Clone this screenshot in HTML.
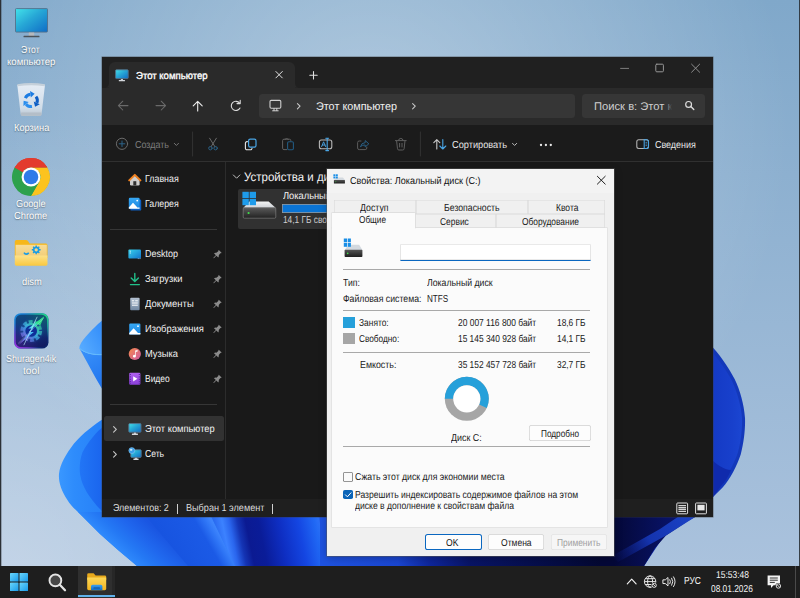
<!DOCTYPE html><html lang="ru"><head><meta charset="utf-8"><title>Desktop</title><style>

html,body{margin:0;padding:0}
body{width:800px;height:598px;overflow:hidden;position:relative;background:#a8c2da;font-family:"Liberation Sans",sans-serif}
.t{position:absolute;white-space:nowrap;line-height:1;display:block;transform-origin:0 0;text-rendering:geometricPrecision}
.a{position:absolute}
svg{position:absolute;overflow:visible}

</style></head><body>

<svg class="a" style="left:0;top:0" width="800" height="598" viewBox="0 0 800 598">
<defs>
<linearGradient id="bgv" x1="0" y1="0" x2="0" y2="566" gradientUnits="userSpaceOnUse"><stop offset="0" stop-color="#80a8ca"/><stop offset="1" stop-color="#aac2dd"/></linearGradient>
<radialGradient id="bgr" cx="370" cy="130" r="420" gradientUnits="userSpaceOnUse"><stop offset="0" stop-color="#fff" stop-opacity=".36"/><stop offset="1" stop-color="#fff" stop-opacity="0"/></radialGradient><radialGradient id="bgl" cx="0" cy="580" r="470" gradientUnits="userSpaceOnUse"><stop offset="0" stop-color="#fff" stop-opacity=".3"/><stop offset="1" stop-color="#fff" stop-opacity="0"/></radialGradient>
<linearGradient id="pl1" x1="79" y1="348" x2="104" y2="335" gradientUnits="userSpaceOnUse"><stop offset="0" stop-color="#58acff"/><stop offset="1" stop-color="#3690fb"/></linearGradient><linearGradient id="pl1b" x1="80" y1="350" x2="104" y2="385" gradientUnits="userSpaceOnUse"><stop offset="0" stop-color="#3a92fa"/><stop offset="1" stop-color="#2074ee"/></linearGradient>
<linearGradient id="pl2" x1="58" y1="0" x2="104" y2="0" gradientUnits="userSpaceOnUse"><stop offset="0" stop-color="#3a98ff"/><stop offset=".35" stop-color="#2e8cfc"/><stop offset="1" stop-color="#2680f8"/></linearGradient>
<linearGradient id="pl3" x1="79" y1="0" x2="106" y2="0" gradientUnits="userSpaceOnUse"><stop offset="0" stop-color="#2276f6"/><stop offset="1" stop-color="#1962ec"/></linearGradient>
<linearGradient id="z1" x1="100" y1="534" x2="127.9" y2="503.4" gradientUnits="userSpaceOnUse"><stop offset="0" stop-color="#2f8afc"/><stop offset=".3" stop-color="#2478f4"/><stop offset=".6" stop-color="#2068ee"/><stop offset="1" stop-color="#1a56e2"/></linearGradient>
<linearGradient id="z2" x1="165" y1="540" x2="208" y2="515" gradientUnits="userSpaceOnUse"><stop offset="0" stop-color="#1754e0"/><stop offset=".72" stop-color="#1b5ae6"/><stop offset=".9" stop-color="#2f76f6"/><stop offset="1" stop-color="#3d84fc"/></linearGradient>
<linearGradient id="z3" x1="218" y1="541" x2="330" y2="518" gradientUnits="userSpaceOnUse"><stop offset="0" stop-color="#2a6af0"/><stop offset=".07" stop-color="#3c82ff"/><stop offset=".13" stop-color="#2a66ee"/><stop offset=".2" stop-color="#1434b4"/><stop offset=".27" stop-color="#0b1a92"/><stop offset=".38" stop-color="#0a1c98"/><stop offset=".55" stop-color="#0e2ec2"/><stop offset=".72" stop-color="#1446e2"/><stop offset=".86" stop-color="#2068f4"/><stop offset=".9" stop-color="#2a70f8"/><stop offset=".92" stop-color="#1a50e0"/><stop offset="1" stop-color="#1c54e4"/></linearGradient>
<linearGradient id="pr1" x1="700" y1="0" x2="746" y2="0" gradientUnits="userSpaceOnUse"><stop offset="0" stop-color="#1236c0"/><stop offset=".7" stop-color="#1840cc"/><stop offset="1" stop-color="#1c48d4"/></linearGradient>
<linearGradient id="pr2" x1="614" y1="0" x2="720" y2="0" gradientUnits="userSpaceOnUse"><stop offset="0" stop-color="#040838"/><stop offset=".5" stop-color="#081264"/><stop offset="1" stop-color="#0c1c86"/></linearGradient>
<linearGradient id="pr3" x1="612" y1="560" x2="704" y2="508" gradientUnits="userSpaceOnUse"><stop offset="0" stop-color="#0c1e8c" stop-opacity="0"/><stop offset=".4" stop-color="#1638b8" stop-opacity=".9"/><stop offset="1" stop-color="#1c46cc"/></linearGradient>
<linearGradient id="ud" x1="326" y1="0" x2="614" y2="0" gradientUnits="userSpaceOnUse"><stop offset="0" stop-color="#1e52e0"/><stop offset=".25" stop-color="#1a46d2"/><stop offset=".36" stop-color="#0e269c"/><stop offset=".5" stop-color="#081466"/><stop offset="1" stop-color="#03072e"/></linearGradient>
</defs>
<rect width="800" height="598" fill="url(#bgv)"/>
<rect width="800" height="598" fill="url(#bgr)"/>
<rect width="800" height="598" fill="url(#bgl)"/>
<!-- upper-left petal -->
<path d="M79.4,348.4 C84,353 93,355.4 104,354.8 L104,392 C97,381 88,364 82.3,353.6 Z" fill="url(#pl1b)"/>
<path d="M104,319 C97,324.5 87,334 81,343 Q79,346.5 79.4,348.4 C84,353 93,355.4 104,354.8 Z" fill="url(#pl1)"/>
<path d="M79.6,348.2 C84,352.8 93,355.2 104,354.6" fill="none" stroke="#66beff" stroke-width=".9"/>
<!-- lower-left petal -->
<path d="M104,418.5 C96,423 82,434 74,443.5 C66,454 60,464 59,474 C58.4,482 61,490 67.4,500 C71,506 77,511 82,516 L100,534 L118,550 L137,566 L330,566 L330,500 L104,500 Z" fill="url(#pl2)"/>
<path d="M104,426 C97,431 88,442 82.6,452 C79,461 79.4,472 80.4,476 C82,486 90,500 104,513 Z" fill="url(#pl3)"/>
<!-- strip below window -->
<path d="M78,512 L146,512 L190,566 L137,566 L118,550 L100,534 Z" fill="url(#z1)"/>
<path d="M142,512 L209,512 L235,566 L188,566 Z" fill="url(#z2)"/>
<path d="M209,512 L330,512 L330,566 L235,566 Z" fill="url(#z3)"/>
<rect x="320" y="512" width="300" height="54" fill="url(#ud)"/>
<!-- right petal -->
<path d="M710,344.5 C718,352 729,368 734.6,379 C740,390 744,404 745,418 C745.4,428 744,442 740.7,454.5 C737,466 730,479 722.6,487.6 L713.5,496.6 L700,509 L688,519.4 L676,527.5 L665,534.3 L655,548 L644,566 L600,566 L600,500 L710,500 Z" fill="#1338ba"/>
<path d="M710,350 C717,357 727,371 732,381 C737,392 741,405 742,418 C742.4,428 741,441 738,452 C734.5,463 728,475 721,483 L710,494 Z" fill="url(#pr1)"/>
<path d="M710,458 C716,464 724,470 731,470 C728,477 725,482 721,486 L713.5,496.6 L700,509 L665,534.3 L644,566 L600,566 L600,510 Z" fill="#0f2aac"/>
<path d="M600,512 L704,512 L688,521 L666,535.4 L655,548 L644,566 L600,566 Z" fill="url(#pr2)"/>
<path d="M706,510 L688,521.4 L666,535.4 L618,562 L612,556 L660,529 L694,506 Z" fill="url(#pr3)"/>
<rect x="0" y="0" width="1.3" height="566" fill="#2b3036"/><rect x="799.1" y="0" width=".9" height="566" fill="#2b3036"/>
</svg>

<svg class="a" style="left:0;top:0" width="800" height="598" viewBox="0 0 800 598"><defs><linearGradient id="gm1" x1="0" y1="0" x2="1" y2="1"><stop offset="0" stop-color="#43e3ea"/><stop offset=".45" stop-color="#27a8d6"/><stop offset="1" stop-color="#0f6cc6"/></linearGradient></defs><rect x="15.50" y="8.60" width="32.00" height="23.50" rx=".8" fill="url(#gm1)" stroke="#55718a" stroke-width=".9"/><rect x="28.78" y="32.50" width="5.44" height="4.00" fill="#b4b9be"/><rect x="23.50" y="35.86" width="16.00" height="1.41" rx=".5" fill="#4b5258"/></svg>
<span class="t" style="left:21.20px;top:46.20px;font-size:10.2px;color:#fff;transform:scaleX(0.8461);text-shadow:0 .7px 1.4px rgba(0,0,0,.34),0 0 1.4px rgba(0,0,0,.2);">Этот</span>
<span class="t" style="left:6.80px;top:57.90px;font-size:10.2px;color:#fff;transform:scaleX(0.9421);text-shadow:0 .7px 1.4px rgba(0,0,0,.34),0 0 1.4px rgba(0,0,0,.2);">компьютер</span>
<svg class="a" style="left:0;top:0" width="800" height="598" viewBox="0 0 800 598">
<defs><linearGradient id="rb1" x1="0" y1="0" x2="0" y2="1"><stop offset="0" stop-color="#e9eff6" stop-opacity=".95"/><stop offset=".75" stop-color="#d6e0ea" stop-opacity=".93"/><stop offset="1" stop-color="#b7c2cd"/></linearGradient></defs>
<path d="M17.3,85 L45,85 L41.6,114 Q41.5,116 39.5,116 L22.8,116 Q20.8,116 20.6,114 Z" fill="url(#rb1)"/>
<path d="M17.3,84.2 Q31,81.6 45,84.2 L44.8,86.2 Q31,84.2 17.5,86.2Z" fill="#c5d0da"/>
<rect x="20.8" y="112.6" width="20.7" height="3.2" rx="1" fill="#b4bec8"/>
<g><path d="M25.35,98.08 A6.2,6.2 0 0 1 30.45,94.23" fill="none" stroke="#1c7ce2" stroke-width="3"/><path d="M30.11,90.95 L34.63,93.79 L30.80,97.52 Z" fill="#1c7ce2"/><path d="M35.99,96.58 A6.2,6.2 0 0 1 36.76,102.92" fill="none" stroke="#0e5ec4" stroke-width="3"/><path d="M39.78,104.26 L35.06,106.76 L33.75,101.58 Z" fill="#0e5ec4"/><path d="M31.96,106.54 A6.2,6.2 0 0 1 26.08,104.04" fill="none" stroke="#2b8eee" stroke-width="3"/><path d="M23.41,105.98 L23.62,100.65 L28.75,102.10 Z" fill="#2b8eee"/></g></svg>
<span class="t" style="left:13.50px;top:123.80px;font-size:10.2px;color:#fff;transform:scaleX(0.9095);text-shadow:0 .7px 1.4px rgba(0,0,0,.34),0 0 1.4px rgba(0,0,0,.2);">Корзина</span>
<svg class="a" style="left:0;top:0" width="800" height="598" viewBox="0 0 800 598">
<g transform="translate(31,177)">
<circle r="18.6" fill="#2da14c"/>
<path d="M-16.37,-9.45 A18.9,18.9 0 0 1 16.37,-9.45 L0,-9.45 A9.45,9.45 0 0 0 -8.18,-4.72 Z" fill="#e33b2e"/>
<path d="M16.37,-9.45 A18.9,18.9 0 0 1 0,18.9 L8.18,4.72 A9.45,9.45 0 0 0 8.18,-4.72 L0,-9.45 Z" fill="#fcc31e"/>
<path d="M0,18.9 A18.9,18.9 0 0 1 -16.37,-9.45 L-8.18,4.72 A9.45,9.45 0 0 0 8.18,4.72 Z" fill="#2da14c"/>
<path d="M-16.37,-9.45 L-8.18,-4.72 A9.45,9.45 0 0 0 -8.18,4.72 Z" fill="#2da14c"/>
<path d="M-8.18,-4.72 L-16.37,-9.45 A18.9,18.9 0 0 1 16.37,-9.45 L0,-9.45 A9.45,9.45 0 0 0 -8.18,-4.72Z" fill="#e33b2e"/>
<circle r="9.45" fill="#fff"/>
<circle r="7.3" fill="#2f7be9"/>
</g></svg>
<span class="t" style="left:15.60px;top:200.20px;font-size:10.2px;color:#fff;transform:scaleX(0.9008);text-shadow:0 .7px 1.4px rgba(0,0,0,.34),0 0 1.4px rgba(0,0,0,.2);">Google</span>
<span class="t" style="left:14.40px;top:211.80px;font-size:10.2px;color:#fff;transform:scaleX(0.9163);text-shadow:0 .7px 1.4px rgba(0,0,0,.34),0 0 1.4px rgba(0,0,0,.2);">Chrome</span>
<svg class="a" style="left:0;top:0" width="800" height="598" viewBox="0 0 800 598">
<defs><linearGradient id="fd1" x1="0" y1="0" x2="0" y2="1"><stop offset="0" stop-color="#fde28a"/><stop offset="1" stop-color="#f9c840"/></linearGradient>
<linearGradient id="fd2" x1="0" y1="0" x2="0" y2="1"><stop offset="0" stop-color="#f8dc96"/><stop offset="1" stop-color="#f2cd78"/></linearGradient></defs>
<path d="M14.8,241.6 Q14.8,240 16.4,240 L26,240 Q27,240 27.8,240.8 L29.6,243.6 L45.9,243.6 Q47.5,243.6 47.5,245.2 L47.5,258 L14.8,258Z" fill="#f6b71b"/>
<rect x="15.6" y="244.8" width="31.2" height="12" fill="url(#fd2)"/>
<path d="M14.8,255.4 L47.5,255.4 L47.5,264 Q47.5,265.7 45.9,265.7 L16.4,265.7 Q14.8,265.7 14.8,264Z" fill="url(#fd1)"/>
<g transform="translate(36.2,249.8)"><circle r="2.5" fill="none" stroke="#1a9ce4" stroke-width="1.7"/>
<g stroke="#1a9ce4" stroke-width="1.4"><path d="M0,-4.4V-2.8M0,4.4V2.8M-4.4,0H-2.8M4.4,0H2.8M-3.1,-3.1L-2,-2M3.1,3.1L2,2M-3.1,3.1L-2,2M3.1,-3.1L2,-2"/></g></g>
<path d="M24,252.6 Q25.8,255.6 28.8,252.8" fill="none" stroke="#1a9ce4" stroke-width="1.6"/>
</svg>
<span class="t" style="left:21.50px;top:277.80px;font-size:10.2px;color:#fff;transform:scaleX(0.9156);text-shadow:0 .7px 1.4px rgba(0,0,0,.34),0 0 1.4px rgba(0,0,0,.2);">dism</span>
<svg class="a" style="left:0;top:0" width="800" height="598" viewBox="0 0 800 598">
<defs><linearGradient id="sh1" x1="0" y1="0" x2="1" y2="1"><stop offset="0" stop-color="#1c8ede"/><stop offset=".5" stop-color="#1650b0"/><stop offset="1" stop-color="#0b1a5c"/></linearGradient>
<radialGradient id="sh4" cx=".92" cy=".08" r=".62"><stop offset="0" stop-color="#22dc84"/><stop offset=".5" stop-color="#1fbf96" stop-opacity=".7"/><stop offset="1" stop-color="#1fbf96" stop-opacity="0"/></radialGradient>
<radialGradient id="sh5" cx=".06" cy=".94" r=".66"><stop offset="0" stop-color="#9a34e0"/><stop offset=".5" stop-color="#8a30d0" stop-opacity=".7"/><stop offset="1" stop-color="#8a30d0" stop-opacity="0"/></radialGradient>
<linearGradient id="sh2" x1="0" y1="0" x2="0" y2="1"><stop offset="0" stop-color="#0d3a68"/><stop offset=".5" stop-color="#0f2a70"/><stop offset="1" stop-color="#14175c"/></linearGradient>
<linearGradient id="sh3" x1="1" y1="0" x2="0" y2="1"><stop offset="0" stop-color="#34ea86"/><stop offset=".45" stop-color="#4cd6f2"/><stop offset=".6" stop-color="#46a8f6"/><stop offset="1" stop-color="#a866f2"/></linearGradient>
<radialGradient id="sh7"><stop offset="0" stop-color="#2aa0e8" stop-opacity=".5"/><stop offset="1" stop-color="#2aa0e8" stop-opacity="0"/></radialGradient><linearGradient id="sh6" x1="0" y1="0" x2="1" y2="1"><stop offset="0" stop-color="#36b8f4"/><stop offset="1" stop-color="#2a5ad8"/></linearGradient></defs>
<rect x="14.2" y="313.2" width="34.3" height="35.4" rx="6.4" fill="url(#sh1)"/>
<rect x="14.2" y="313.2" width="34.3" height="35.4" rx="6.4" fill="url(#sh4)"/>
<rect x="14.2" y="313.2" width="34.3" height="35.4" rx="6.4" fill="url(#sh5)"/>
<rect x="15.7" y="314.7" width="31.3" height="32.4" rx="5.2" fill="url(#sh2)" opacity=".78"/>
<g transform="translate(31.2,331)">
<circle r="13" fill="url(#sh7)"/>
<circle r="9.2" fill="none" stroke="url(#sh3)" stroke-width="3.4" stroke-dasharray="3.9 1.9" opacity=".6"/>
<circle r="6.9" fill="none" stroke="url(#sh3)" stroke-width="2.2" opacity=".7"/>
<circle r="5.6" fill="#0f2e98"/>
<path d="M13,-14.4 L-2.4,1 L2.6,1 L-12.8,14 L2,-2.6 L-3,-2.6 Z" fill="url(#sh3)"/><path d="M13,-14.4 L4,-8 L9,-5.4Z" fill="#30e48a" opacity=".9"/>
<path d="M6,-14.2 L-7.4,14.2" stroke="#bdf0ff" stroke-width=".8" opacity=".8"/>
<path d="M12.6,-13 L-13,12.4" stroke="#d8f8ff" stroke-width=".6" opacity=".55"/></g>
</svg>
<span class="t" style="left:5.60px;top:355.20px;font-size:10.2px;color:#fff;transform:scaleX(0.8773);text-shadow:0 .7px 1.4px rgba(0,0,0,.34),0 0 1.4px rgba(0,0,0,.2);">Shuragen4ik</span>
<span class="t" style="left:22.50px;top:366.80px;font-size:10.2px;color:#fff;transform:scaleX(0.9977);text-shadow:0 .7px 1.4px rgba(0,0,0,.34),0 0 1.4px rgba(0,0,0,.2);">tool</span>
<div class="a" style="left:101.6px;top:56.6px;width:611.7px;height:460.8px;background:#191919;box-shadow:0 0 0 .5px rgba(60,60,60,.6)"></div>
<div class="a" style="left:102px;top:57px;width:611.2px;height:30.5px;background:#202020"></div>
<div class="a" style="left:102px;top:87.5px;width:611.2px;height:37.8px;background:#2a2a2a"></div>
<div class="a" style="left:102px;top:125.3px;width:611.2px;height:35.7px;background:#1b1b1b"></div>
<div class="a" style="left:102px;top:161px;width:611.2px;height:1px;background:#303030"></div>
<div class="a" style="left:109px;top:62px;width:186px;height:26px;background:#2a2a2a;border-radius:6px 6px 0 0"></div>
<svg class="a" style="left:0;top:0" width="800" height="598" viewBox="0 0 800 598"><path d="M104.5,87.6 Q109,87.6 109,83 V87.6Z M299.5,87.6 Q295,87.6 295,83 V87.6Z" fill="#2a2a2a"/></svg>
<svg class="a" style="left:0;top:0" width="800" height="598" viewBox="0 0 800 598"><defs><linearGradient id="gm2" x1="0" y1="0" x2="1" y2="1"><stop offset="0" stop-color="#43e3ea"/><stop offset=".45" stop-color="#27a8d6"/><stop offset="1" stop-color="#0f6cc6"/></linearGradient></defs><rect x="115.60" y="69.80" width="12.60" height="8.80" rx=".8" fill="url(#gm2)" stroke="#55718a" stroke-width=".9"/><rect x="120.83" y="79.00" width="2.14" height="1.50" fill="#c9ced3"/><rect x="118.75" y="80.01" width="6.30" height="1.30" rx=".5" fill="#d5d9dd"/></svg>
<span class="t" style="left:135.60px;top:71.50px;font-size:10.2px;color:#fff;transform:scaleX(0.9398);-webkit-text-stroke:.35px #fff;">Этот компьютер</span>
<svg class="a" style="left:0;top:0" width="800" height="598" viewBox="0 0 800 598"><g fill="none" stroke-linecap="round">
<path d="M275.9,71.5 l6.4,6.4 M282.3,71.5 l-6.4,6.4" stroke="#e4e4e4" stroke-width="1"/>
<path d="M309.8,75.2 h7.4 M313.5,71.5 v7.4" stroke="#e0e0e0" stroke-width="1.05"/>
<path d="M620.6,68.4 h8" stroke="#7e7e7e" stroke-width="1"/>
<rect x="655.8" y="64.2" width="7.6" height="7.6" rx="1" stroke="#979797" stroke-width="1"/>
<path d="M691.6,64.2 l8,8 M699.6,64.2 l-8,8" stroke="#8e8e8e" stroke-width="1"/>
<!-- nav arrows -->
<path d="M128,105.6 h-9.4 M122.8,101.2 l-4.4,4.4 l4.4,4.4" stroke="#6a6a6a" stroke-width="1.05" stroke-linejoin="round"/>
<path d="M156,105.6 h9.4 M161.2,101.2 l4.4,4.4 l-4.4,4.4" stroke="#6a6a6a" stroke-width="1.05" stroke-linejoin="round"/>
<path d="M197.7,111 v-9.6 M193.2,105.8 l4.5,-4.5 l4.5,4.5" stroke="#ececec" stroke-width="1.1" stroke-linejoin="round"/>
<path d="M239.6,103.2 A4.6,4.6 0 1 0 240,108" stroke="#dcdcdc" stroke-width="1.1"/>
<path d="M240.2,100.4 v3.2 h-3.2" stroke="#dcdcdc" stroke-width="1.1" stroke-linejoin="round"/>
</g></svg>
<div class="a" style="left:259px;top:94px;width:316px;height:24px;background:#363636;border-radius:3.5px"></div>
<div class="a" style="left:581.6px;top:94px;width:123px;height:24px;background:#363636;border-radius:3.5px"></div>
<svg class="a" style="left:0;top:0" width="800" height="598" viewBox="0 0 800 598"><g fill="none" stroke="#cfcfcf" stroke-linecap="round" stroke-linejoin="round">
<rect x="270" y="100.4" width="10.8" height="7.8" rx="1.2" stroke-width="1.1"/>
<path d="M272.6,110.8 h5.6 M274,108.4 v2.2 M276.8,108.4 v2.2" stroke-width="1"/>
</g><path d="M297.40,103.53 l2.67,2.67 l-2.67,2.67" fill="none" stroke="#c8c8c8" stroke-width="1.05" stroke-linecap="round" stroke-linejoin="round"/><path d="M412.60,103.53 l2.67,2.67 l-2.67,2.67" fill="none" stroke="#c8c8c8" stroke-width="1.05" stroke-linecap="round" stroke-linejoin="round"/>
<circle cx="688.6" cy="104.4" r="2.9" fill="none" stroke="#dcdcdc" stroke-width="1.2"/>
<path d="M690.8,106.6 l3,3" stroke="#dcdcdc" stroke-width="1.4" stroke-linecap="round"/>
</svg>
<span class="t" style="left:316.00px;top:101.50px;font-size:11.2px;color:#f0f0f0;transform:scaleX(0.9682);">Этот компьютер</span>
<div class="a" style="left:590px;top:96px;width:82px;height:20px;overflow:hidden"><span class="t" style="left:3.60px;top:5.50px;font-size:11.2px;color:#cfcfcf;transform:scaleX(1.0005);">Поиск в: Этот компьютер</span><div class="a" style="left:74px;top:0;width:8px;height:20px;background:linear-gradient(90deg,rgba(54,54,54,0),#363636)"></div></div>
<svg class="a" style="left:0;top:0" width="800" height="598" viewBox="0 0 800 598"><g fill="none" stroke-linecap="round" stroke-linejoin="round">
<circle cx="122" cy="143.8" r="5.6" stroke="#6a6a6a" stroke-width="1"/>
<path d="M119.2,143.8 h5.6 M122,141 v5.6" stroke="#2c6288" stroke-width="1"/>
<path d="M174.32,143.36 l2.08,2.08 l2.08,-2.08" fill="none" stroke="#777" stroke-width="1.00" stroke-linecap="round" stroke-linejoin="round"/>
<path d="M192.6,132 v24 M420.4,132 v24" stroke="#333" stroke-width="1"/>
<!-- cut -->
<path d="M209.6,138.2 l5.4,8.6 M216.4,138.2 l-5.4,8.6" stroke="#6a6a6a" stroke-width="1"/>
<circle cx="210.4" cy="148.2" r="1.7" stroke="#2a6086" stroke-width="1"/><circle cx="215.6" cy="148.2" r="1.7" stroke="#2a6086" stroke-width="1"/>
<!-- copy -->
<path d="M247.4,141.6 h-0.4 a1.6,1.6 0 0 0 -1.6,1.6 v5 a1.6,1.6 0 0 0 1.6,1.6 h3.4 a1.6,1.6 0 0 0 1.6,-1.6" stroke="#e8e8e8" stroke-width="1.1"/>
<rect x="248.6" y="139.2" width="7.4" height="8" rx="1.6" stroke="#4aa6e6" stroke-width="1.2"/>
<!-- paste -->
<path d="M286.6,149.6 h-2.6 a1.4,1.4 0 0 1 -1.4,-1.4 v-7.6 a1.4,1.4 0 0 1 1.4,-1.4 h5.4 a1.4,1.4 0 0 1 1.4,1.4 v0.6" stroke="#606060" stroke-width="1"/>
<path d="M285,139.2 q1.7,-1.4 3.4,0" stroke="#606060" stroke-width="1"/>
<rect x="287.6" y="141.8" width="5.8" height="8" rx="1.2" stroke="#225a80" stroke-width="1.1"/>
<!-- rename -->
<rect x="319.4" y="140" width="12.4" height="8.8" rx="2" stroke="#b8b8b8" stroke-width="1.1"/>
<path d="M321.6,146.6 l2,-4.8 l2,4.8 M322.4,145 h2.6" stroke="#4aa6e6" stroke-width=".9"/>
<path d="M327.2,138.4 v12 M325.8,138.2 h2.8 M325.8,150.6 h2.8" stroke="#4aa6e6" stroke-width="1.1"/>
<!-- share -->
<path d="M361,141 h-1.8 a1.6,1.6 0 0 0 -1.6,1.6 v5.4 a1.6,1.6 0 0 0 1.6,1.6 h6 a1.6,1.6 0 0 0 1.6,-1.6 v-0.8" stroke="#5c5c5c" stroke-width="1"/>
<path d="M360.6,146.4 q0.6,-3.6 4.6,-3.8 v-2 l3.6,3.2 l-3.6,3.2 v-2 q-2.8,-0.2 -4.6,1.4Z" stroke="#2a6086" stroke-width="1"/>
<!-- delete -->
<path d="M395.4,140.6 h10.8 M398.6,140.4 q0,-2 2.2,-2 q2.2,0 2.2,2 M396.6,140.8 l0.9,8 q0.1,1.2 1.4,1.2 h3.8 q1.3,0 1.4,-1.2 l0.9,-8 M399.6,143.4 v3.6 M402,143.4 v3.6" stroke="#5e5e5e" stroke-width="1"/>
<!-- sort -->
<path d="M436.8,149 v-9.4 M433.8,142.6 l3,-3 l3,3" stroke="#c8c8c8" stroke-width="1.1"/>
<path d="M442.8,139.6 v9.4 M439.8,146 l3,3 l3,-3" stroke="#4aa6e6" stroke-width="1.1"/>
<path d="M512.52,143.36 l2.08,2.08 l2.08,-2.08" fill="none" stroke="#bdbdbd" stroke-width="1.00" stroke-linecap="round" stroke-linejoin="round"/>
<!-- details -->
<rect x="636.8" y="139.7" width="11.7" height="8.7" rx="2" stroke="#b6b6b6" stroke-width="1.05"/>
<path d="M644.2,139.7 v8.7" stroke="#4aa6e6" stroke-width="1.05"/>
<path d="M644.2,139.7 h2.3 a2,2 0 0 1 2,2 v4.7 a2,2 0 0 1 -2,2 h-2.3" stroke="#4aa6e6" stroke-width="1.05"/>
<path d="M645.9,142.4 h.9 M645.9,144 h.9 M645.9,145.6 h.9" stroke="#4aa6e6" stroke-width=".7"/>
</g>
<g fill="#eaeaea"><circle cx="541" cy="145" r="1.15"/><circle cx="545.9" cy="145" r="1.15"/><circle cx="550.8" cy="145" r="1.15"/></g>
</svg>
<span class="t" style="left:135.00px;top:140.50px;font-size:10.2px;color:#7c7c7c;transform:scaleX(0.8781);">Создать</span>
<span class="t" style="left:452.00px;top:140.70px;font-size:10.2px;color:#e6e6e6;transform:scaleX(0.9035);">Сортировать</span>
<span class="t" style="left:655.20px;top:140.70px;font-size:10.2px;color:#e6e6e6;transform:scaleX(0.8765);">Сведения</span>
<div class="a" style="left:225px;top:162px;width:1px;height:337px;background:#2c2c2c"></div>
<div class="a" style="left:110px;top:229px;width:107px;height:1px;background:#363636"></div>
<div class="a" style="left:110px;top:403.6px;width:107px;height:1px;background:#363636"></div>
<div class="a" style="left:104px;top:416.4px;width:119.6px;height:24.2px;background:#323232;border-radius:2.5px"></div>
<svg class="a" style="left:0;top:0" width="800" height="598" viewBox="0 0 800 598">
<defs>
<linearGradient id="gdk" x1="0" y1="0" x2="1" y2="1"><stop offset="0" stop-color="#38d2ec"/><stop offset="1" stop-color="#1274cc"/></linearGradient>
<linearGradient id="gdoc" x1="0" y1="0" x2="0" y2="1"><stop offset="0" stop-color="#b4c2d2"/><stop offset="1" stop-color="#7288a2"/></linearGradient>
<linearGradient id="gmu" x1="0" y1="0" x2="1" y2="1"><stop offset="0" stop-color="#f58a4a"/><stop offset="1" stop-color="#cf5aa6"/></linearGradient>
<linearGradient id="gvi" x1="0" y1="0" x2="0" y2="1"><stop offset="0" stop-color="#b060f0"/><stop offset="1" stop-color="#8a3fd8"/></linearGradient>
<linearGradient id="gpi" x1="0" y1="0" x2="0" y2="1"><stop offset="0" stop-color="#36a8f4"/><stop offset="1" stop-color="#1c86e0"/></linearGradient>
</defs>
<!-- home -->
<path d="M130,180 L134.8,175.4 L139.6,180 V184.2 Q139.6,185.4 138.4,185.4 H131.2 Q130,185.4 130,184.2Z" fill="#cdcdcd"/>
<rect x="133.3" y="181.2" width="3" height="4.2" fill="#303030"/>
<path d="M129.2,180.4 L134.8,174.9 L140.4,180.4" fill="none" stroke="#f0811f" stroke-width="2" stroke-linecap="round" stroke-linejoin="round"/>
<!-- gallery -->
<rect x="130.4" y="199.6" width="10.8" height="11" rx="1.2" fill="#0f5fc0"/>
<rect x="128.8" y="197.8" width="10.8" height="11" rx="1.2" fill="url(#gpi)"/>
<path d="M128.8,207.4 L133,202.8 L137.4,207.4 L139.6,207.4 V208.8 H128.8Z" fill="#fff"/><path d="M129.6,207.8 L133,203.6 L137,207.8Z" fill="#fff"/>
<circle cx="137.2" cy="200.6" r=".9" fill="#fff"/>
<!-- desktop -->
<rect x="128.4" y="249.4" width="12.6" height="9" rx="1" fill="url(#gdk)"/>
<path d="M129.8,251.2 h1 M129.8,253 h1" stroke="#fff" stroke-width=".9"/><path d="M137.8,258.6 h.9 M139.6,258.6 h.9" stroke="#bfe4f6" stroke-width=".7"/>
<!-- downloads -->
<path d="M134.8,273.4 v8 M131.2,278 l3.6,3.6 l3.6,-3.6" fill="none" stroke="#22c08a" stroke-width="1.4" stroke-linecap="round" stroke-linejoin="round"/>
<path d="M130.4,284.6 h9" stroke="#22c08a" stroke-width="1.3" stroke-linecap="round"/>
<!-- documents -->
<rect x="130.2" y="297.8" width="9.4" height="12.4" rx="1" fill="url(#gdoc)"/>
<path d="M132,300.8 h2.2 M135.2,300.8 h2.6 M132,303 h5.8 M132,305.2 h5.8" stroke="#fff" stroke-width="1"/>
<!-- pictures -->
<rect x="129.2" y="323.6" width="11.2" height="10.8" rx="1.2" fill="url(#gpi)"/>
<path d="M129.2,333 L133.6,328.2 L138,333 H140.4 V334.4 H129.2Z" fill="#fff"/><path d="M130,333.4 L133.6,329 L137.6,333.4Z" fill="#fff"/>
<circle cx="138" cy="326.2" r=".9" fill="#fff"/>
<!-- music -->
<circle cx="134.8" cy="354" r="6.1" fill="url(#gmu)"/>
<path d="M135.2,350.6 L137.6,350 V351.6 L135.9,352 V356.2 A1.5,1.3 0 1 1 135.2,355.1Z" fill="#fff"/>
<!-- video -->
<rect x="129.2" y="372.8" width="11.2" height="12" rx="1.2" fill="url(#gvi)"/>
<path d="M130.3,374 v1 M130.3,376.4 v1 M130.3,378.8 v1 M130.3,381.2 v1 M130.3,383.4 v.6 M139.3,374 v1 M139.3,376.4 v1 M139.3,378.8 v1 M139.3,381.2 v1 M139.3,383.4 v.6" stroke="#4a1f90" stroke-width="1"/>
<path d="M133.2,376.2 L137.4,378.8 L133.2,381.4Z" fill="#fff"/>
<g transform="translate(217.2,254.40) rotate(45) scale(.84)" fill="#8c8c8c"><path d="M-2.3,-5 H2.3 V-4 H1.7 L2,-0.6 Q3.6,0.4 3.6,1.8 H0.45 V5.6 L0,6.6 L-0.45,5.6 V1.8 H-3.6 Q-3.6,0.4 -2,-0.6 L-1.7,-4 H-2.3Z"/></g><g transform="translate(217.2,279.40) rotate(45) scale(.84)" fill="#8c8c8c"><path d="M-2.3,-5 H2.3 V-4 H1.7 L2,-0.6 Q3.6,0.4 3.6,1.8 H0.45 V5.6 L0,6.6 L-0.45,5.6 V1.8 H-3.6 Q-3.6,0.4 -2,-0.6 L-1.7,-4 H-2.3Z"/></g><g transform="translate(217.2,304.20) rotate(45) scale(.84)" fill="#8c8c8c"><path d="M-2.3,-5 H2.3 V-4 H1.7 L2,-0.6 Q3.6,0.4 3.6,1.8 H0.45 V5.6 L0,6.6 L-0.45,5.6 V1.8 H-3.6 Q-3.6,0.4 -2,-0.6 L-1.7,-4 H-2.3Z"/></g><g transform="translate(217.2,329.20) rotate(45) scale(.84)" fill="#8c8c8c"><path d="M-2.3,-5 H2.3 V-4 H1.7 L2,-0.6 Q3.6,0.4 3.6,1.8 H0.45 V5.6 L0,6.6 L-0.45,5.6 V1.8 H-3.6 Q-3.6,0.4 -2,-0.6 L-1.7,-4 H-2.3Z"/></g><g transform="translate(217.2,354.20) rotate(45) scale(.84)" fill="#8c8c8c"><path d="M-2.3,-5 H2.3 V-4 H1.7 L2,-0.6 Q3.6,0.4 3.6,1.8 H0.45 V5.6 L0,6.6 L-0.45,5.6 V1.8 H-3.6 Q-3.6,0.4 -2,-0.6 L-1.7,-4 H-2.3Z"/></g><g transform="translate(217.2,379.20) rotate(45) scale(.84)" fill="#8c8c8c"><path d="M-2.3,-5 H2.3 V-4 H1.7 L2,-0.6 Q3.6,0.4 3.6,1.8 H0.45 V5.6 L0,6.6 L-0.45,5.6 V1.8 H-3.6 Q-3.6,0.4 -2,-0.6 L-1.7,-4 H-2.3Z"/></g><path d="M113.60,426.67 l2.73,2.73 l-2.73,2.73" fill="none" stroke="#c8c8c8" stroke-width="1.10" stroke-linecap="round" stroke-linejoin="round"/><path d="M113.60,451.67 l2.73,2.73 l-2.73,2.73" fill="none" stroke="#c8c8c8" stroke-width="1.10" stroke-linecap="round" stroke-linejoin="round"/></svg>
<svg class="a" style="left:0;top:0" width="800" height="598" viewBox="0 0 800 598"><defs><linearGradient id="gm3" x1="0" y1="0" x2="1" y2="1"><stop offset="0" stop-color="#43e3ea"/><stop offset=".45" stop-color="#27a8d6"/><stop offset="1" stop-color="#0f6cc6"/></linearGradient></defs><rect x="128.80" y="423.60" width="12.20" height="8.60" rx=".8" fill="url(#gm3)" stroke="#55718a" stroke-width=".9"/><rect x="133.86" y="432.60" width="2.07" height="1.46" fill="#c9ced3"/><rect x="131.85" y="433.58" width="6.10" height="1.30" rx=".5" fill="#d5d9dd"/></svg>
<svg class="a" style="left:0;top:0" width="800" height="598" viewBox="0 0 800 598"><defs><linearGradient id="gm4" x1="0" y1="0" x2="1" y2="1"><stop offset="0" stop-color="#43e3ea"/><stop offset=".45" stop-color="#27a8d6"/><stop offset="1" stop-color="#0f6cc6"/></linearGradient></defs><rect x="130.80" y="449.80" width="10.40" height="7.60" rx=".8" fill="url(#gm4)" stroke="#55718a" stroke-width=".9"/><rect x="135.12" y="457.80" width="1.77" height="1.29" fill="#c9ced3"/><rect x="133.40" y="458.62" width="5.20" height="1.30" rx=".5" fill="#d5d9dd"/></svg>
<svg class="a" style="left:0;top:0" width="800" height="598" viewBox="0 0 800 598"><circle cx="131.8" cy="450.6" r="3" fill="#3a9ee8" stroke="#8fcbf4" stroke-width=".5"/><path d="M129.8,449.6 q1.4,-1.4 2.6,-.4 q.4,1.4 -1,1.6 q-1,.8 -1.6,-1.2Z" fill="#c8e8fb"/></svg>
<span class="t" style="left:145.30px;top:174.60px;font-size:10.2px;color:#f2f2f2;transform:scaleX(0.8690);">Главная</span>
<span class="t" style="left:145.30px;top:199.80px;font-size:10.2px;color:#f2f2f2;transform:scaleX(0.8624);">Галерея</span>
<span class="t" style="left:145.30px;top:249.90px;font-size:10.2px;color:#f2f2f2;transform:scaleX(0.8829);">Desktop</span>
<span class="t" style="left:145.30px;top:275.00px;font-size:10.2px;color:#f2f2f2;transform:scaleX(0.9146);">Загрузки</span>
<span class="t" style="left:145.30px;top:299.90px;font-size:10.2px;color:#f2f2f2;transform:scaleX(0.9273);">Документы</span>
<span class="t" style="left:145.30px;top:324.70px;font-size:10.2px;color:#f2f2f2;transform:scaleX(0.9183);">Изображения</span>
<span class="t" style="left:145.30px;top:349.80px;font-size:10.2px;color:#f2f2f2;transform:scaleX(0.9155);">Музыка</span>
<span class="t" style="left:145.30px;top:374.70px;font-size:10.2px;color:#f2f2f2;transform:scaleX(0.8298);">Видео</span>
<span class="t" style="left:145.30px;top:424.50px;font-size:10.2px;color:#f2f2f2;transform:scaleX(0.9148);">Этот компьютер</span>
<span class="t" style="left:145.30px;top:449.70px;font-size:10.2px;color:#f2f2f2;transform:scaleX(0.8425);">Сеть</span>
<svg class="a" style="left:0;top:0" width="800" height="598" viewBox="0 0 800 598"><path d="M233.35,174.97 l3.25,3.25 l3.25,-3.25" fill="none" stroke="#bdbdbd" stroke-width="1.00" stroke-linecap="round" stroke-linejoin="round"/></svg>
<span class="t" style="left:243.60px;top:171.05px;font-size:12.3px;color:#f4f4f4;transform:scaleX(0.9341);">Устройства и диски</span>
<div class="a" style="left:238.2px;top:189.2px;width:190px;height:39.4px;background:#313131;border-radius:2px"></div>
<svg class="a" style="left:0;top:0" width="800" height="598" viewBox="0 0 800 598"><defs><linearGradient id="dv1" x1="0" y1="0" x2="0" y2="1"><stop offset="0" stop-color="#5a5a5a"/><stop offset="1" stop-color="#222"/></linearGradient>
<linearGradient id="dv2" x1="0" y1="0" x2="0" y2="1"><stop offset="0" stop-color="#f4f4f4"/><stop offset="1" stop-color="#cfd2d6"/></linearGradient></defs>
<path d="M249.4,201.4 H268.6 L275.6,207.8 H243.4Z" fill="url(#dv2)"/>
<rect x="243.2" y="207.6" width="32.6" height="10.6" rx="1.2" fill="url(#dv1)" stroke="#8a8a8a" stroke-width=".6"/>
<circle cx="248.6" cy="213" r="1.1" fill="#3fe04a"/>
<g fill="#1e9bea"><rect x="242.4" y="191.8" width="6.4" height="6.3"/><rect x="249.6" y="191.8" width="6.4" height="6.3"/><rect x="242.4" y="198.9" width="6.4" height="6.3"/><rect x="249.6" y="198.9" width="6.4" height="6.3"/></g>
</svg>
<span class="t" style="left:283.00px;top:192.10px;font-size:10.2px;color:#f2f2f2;transform:scaleX(0.9127);">Локальный диск (C:)</span>
<div class="a" style="left:281.6px;top:203.8px;width:140px;height:9.2px;background:#0a74d4;box-shadow:inset 0 0 0 .7px #9a9a9a"></div>
<span class="t" style="left:283.40px;top:216.10px;font-size:10.2px;color:#cfcfcf;transform:scaleX(0.8156);">14,1 ГБ свободно из 32,7 ГБ</span>
<div class="a" style="left:102px;top:498.6px;width:611.2px;height:18.6px;background:#1f1f1f"></div>
<span class="t" style="left:113.20px;top:504.00px;font-size:10.2px;color:#dcdcdc;transform:scaleX(0.8738);">Элементов: 2</span>
<span class="t" style="left:185.60px;top:504.00px;font-size:10.2px;color:#dcdcdc;transform:scaleX(0.8930);">Выбран 1 элемент</span>
<div class="a" style="left:176.8px;top:503.6px;width:1px;height:10.4px;background:#d0d0d0"></div>
<div class="a" style="left:272px;top:503.6px;width:1px;height:10.4px;background:#d0d0d0"></div>
<svg class="a" style="left:0;top:0" width="800" height="598" viewBox="0 0 800 598"><g fill="none" stroke="#e0e0e0" stroke-width="1">
<rect x="676.8" y="503" width="10.8" height="10.8" rx=".8"/>
<path d="M678.4,505.5 h7.6 M678.4,507.5 h7.6 M678.4,509.4 h7.6 M678.4,511.3 h7.6" stroke-width="1.25" stroke="#d4d4d4"/>
<rect x="695.6" y="503" width="10.8" height="10.8" rx=".8"/></g>
<rect x="697.4" y="504.8" width="7.2" height="5.6" fill="#e8e8e8"/>
</svg>
<div class="a" style="left:326.6px;top:169.0px;width:287.0px;height:387.1px;background:#f0f0f0;box-shadow:0 0 0 .7px rgba(90,90,90,.7),0 2px 8px rgba(0,0,0,.28)"></div>
<div class="a" style="left:326.6px;top:169.0px;width:287.0px;height:24.4px;background:#f3f3f3"></div>
<svg class="a" style="left:0;top:0" width="800" height="598" viewBox="0 0 800 598"><g transform="translate(333.40,174.30) scale(0.620,0.500)"><defs><linearGradient id="md1" x1="0" y1="0" x2="0" y2="1"><stop offset="0" stop-color="#565656"/><stop offset="1" stop-color="#1e1e1e"/></linearGradient></defs><path d="M7.4,6.2 H15.4 L18.6,11.4 H0.9 L3,8.6Z" fill="#d3d9df"/><g fill="#1a8ee6"><rect x="0" y="0" width="3.2" height="3.8"/><rect x="3.9" y="0" width="3.2" height="3.8"/><rect x="0" y="4.5" width="3.2" height="3.8"/><rect x="3.9" y="4.5" width="3.2" height="3.8"/></g><rect x="0.8" y="11.2" width="17.8" height="7.4" rx=".8" fill="url(#md1)"/><circle cx="3.9" cy="14.9" r=".8" fill="#3fe04a"/></g><path d="M597.1,176 l8.4,8.4 M605.5,176 l-8.4,8.4" stroke="#1e1e1e" stroke-width="1" fill="none"/></svg>
<span class="t" style="left:350.10px;top:177.25px;font-size:10.1px;color:#111;transform:scaleX(0.8972);">Свойства: Локальный диск (C:)</span>
<div class="a" style="left:333.6px;top:200.4px;width:82.4px;height:13.6px;background:#f0f0f0;box-shadow:inset 0 0 0 .6px #dadada"></div>
<div class="a" style="left:416.0px;top:200.4px;width:112.0px;height:13.6px;background:#f0f0f0;box-shadow:inset 0 0 0 .6px #dadada"></div>
<div class="a" style="left:528.0px;top:200.4px;width:76.8px;height:13.6px;background:#f0f0f0;box-shadow:inset 0 0 0 .6px #dadada"></div>
<div class="a" style="left:415.2px;top:214.0px;width:80.8px;height:14.0px;background:#f0f0f0;box-shadow:inset 0 0 0 .6px #dadada"></div>
<div class="a" style="left:496.0px;top:214.0px;width:108.8px;height:14.0px;background:#f0f0f0;box-shadow:inset 0 0 0 .6px #dadada"></div>
<div class="a" style="left:331.6px;top:227.6px;width:275.6px;height:299px;background:#fbfbfb;box-shadow:0 0 0 .6px #dcdcdc"></div>
<div class="a" style="left:331.6px;top:212.6px;width:83.6px;height:16px;background:#fbfbfb;box-shadow:-.6px -.6px 0 0 #dcdcdc,.6px -.6px 0 0 #dcdcdc"></div>
<span class="t" style="left:360.00px;top:203.55px;font-size:10.1px;color:#1a1a1a;transform:scaleX(0.8704);">Доступ</span>
<span class="t" style="left:444.00px;top:203.55px;font-size:10.1px;color:#1a1a1a;transform:scaleX(0.8635);">Безопасность</span>
<span class="t" style="left:556.00px;top:203.55px;font-size:10.1px;color:#1a1a1a;transform:scaleX(0.8403);">Квота</span>
<span class="t" style="left:359.00px;top:216.15px;font-size:10.1px;color:#1a1a1a;transform:scaleX(0.8132);">Общие</span>
<span class="t" style="left:439.60px;top:217.65px;font-size:10.1px;color:#1a1a1a;transform:scaleX(0.8329);">Сервис</span>
<span class="t" style="left:522.40px;top:217.65px;font-size:10.1px;color:#1a1a1a;transform:scaleX(0.8302);">Оборудование</span>
<svg class="a" style="left:0;top:0" width="800" height="598" viewBox="0 0 800 598"><g transform="translate(343.80,238.50) scale(1.000,1.000)"><defs><linearGradient id="md2" x1="0" y1="0" x2="0" y2="1"><stop offset="0" stop-color="#565656"/><stop offset="1" stop-color="#1e1e1e"/></linearGradient></defs><path d="M7.4,6.2 H15.4 L18.6,11.4 H0.9 L3,8.6Z" fill="#d3d9df"/><g fill="#1a8ee6"><rect x="0" y="0" width="3.2" height="3.8"/><rect x="3.9" y="0" width="3.2" height="3.8"/><rect x="0" y="4.5" width="3.2" height="3.8"/><rect x="3.9" y="4.5" width="3.2" height="3.8"/></g><rect x="0.8" y="11.2" width="17.8" height="7.4" rx=".8" fill="url(#md2)"/><circle cx="3.9" cy="14.9" r=".8" fill="#3fe04a"/></g></svg>
<div class="a" style="left:400px;top:243.6px;width:191.4px;height:17px;background:#fff;box-shadow:inset 0 0 0 .6px #d4d4d4;border-bottom:1.2px solid #0a67c0;box-sizing:border-box;border-radius:1.5px"></div>
<div class="a" style="left:343px;top:269.1px;width:246.8px;height:1px;background:#a9a9a9"></div>
<div class="a" style="left:343px;top:309.5px;width:246.8px;height:1px;background:#a9a9a9"></div>
<div class="a" style="left:343px;top:351.9px;width:246.8px;height:1px;background:#a9a9a9"></div>
<div class="a" style="left:343px;top:445.7px;width:246.8px;height:1px;background:#a9a9a9"></div>
<span class="t" style="left:343.20px;top:279.35px;font-size:10.1px;color:#1a1a1a;transform:scaleX(0.8554);">Тип:</span>
<span class="t" style="left:427.00px;top:279.35px;font-size:10.1px;color:#1a1a1a;transform:scaleX(0.8642);">Локальный диск</span>
<span class="t" style="left:343.20px;top:295.35px;font-size:10.1px;color:#1a1a1a;transform:scaleX(0.8626);">Файловая система:</span>
<span class="t" style="left:427.00px;top:295.35px;font-size:10.1px;color:#1a1a1a;transform:scaleX(0.8043);">NTFS</span>
<div class="a" style="left:343px;top:316.6px;width:11.6px;height:11.2px;background:#26a0da"></div>
<div class="a" style="left:343px;top:332.8px;width:11.6px;height:11.2px;background:#a6a6a6"></div>
<span class="t" style="left:359.10px;top:318.55px;font-size:10.1px;color:#1a1a1a;transform:scaleX(0.8322);">Занято:</span>
<span class="t" style="left:359.20px;top:334.55px;font-size:10.1px;color:#1a1a1a;transform:scaleX(0.8168);">Свободно:</span>
<span class="t" style="left:359.60px;top:360.75px;font-size:10.1px;color:#1a1a1a;transform:scaleX(0.8758);">Емкость:</span>
<span class="t" style="left:458.20px;top:318.55px;font-size:10.1px;color:#1a1a1a;transform:scaleX(0.8350);">20 007 116 800 байт</span>
<span class="t" style="left:458.20px;top:334.55px;font-size:10.1px;color:#1a1a1a;transform:scaleX(0.8283);">15 145 340 928 байт</span>
<span class="t" style="left:458.20px;top:360.75px;font-size:10.1px;color:#1a1a1a;transform:scaleX(0.8283);">35 152 457 728 байт</span>
<span class="t" style="left:557.40px;top:318.55px;font-size:10.1px;color:#1a1a1a;transform:scaleX(0.8279);">18,6 ГБ</span>
<span class="t" style="left:557.40px;top:334.55px;font-size:10.1px;color:#1a1a1a;transform:scaleX(0.8279);">14,1 ГБ</span>
<span class="t" style="left:557.40px;top:360.75px;font-size:10.1px;color:#1a1a1a;transform:scaleX(0.8279);">32,7 ГБ</span>
<svg class="a" style="left:0;top:0" width="800" height="598" viewBox="0 0 800 598"><circle cx="466.8" cy="398.8" r="22" fill="#a6a6a6"/><path d="M444.80,398.80 A22,22 0 1 1 486.75,408.07 L479.13,404.53 A13.6,13.6 0 1 0 453.20,398.80 Z" fill="#26a0da"/><circle cx="466.8" cy="398.8" r="13.6" fill="#fff"/></svg>
<span class="t" style="left:450.50px;top:433.55px;font-size:10.1px;color:#1a1a1a;transform:scaleX(0.8811);">Диск C:</span>
<div class="a" style="left:529.0px;top:425.4px;width:62.2px;height:15.8px;background:#fdfdfd;border-radius:2.6px;box-shadow:inset 0 0 0 0.7px #d0d0d0"></div>
<span class="t" style="left:540.80px;top:429.75px;font-size:10.1px;color:#1a1a1a;transform:scaleX(0.8131);">Подробно</span>
<div class="a" style="left:343.2px;top:472px;width:9.6px;height:9.6px;background:#fafafa;border-radius:1.8px;box-shadow:inset 0 0 0 .8px #767676"></div>
<div class="a" style="left:343.2px;top:489.6px;width:9.8px;height:9.8px;background:#0a64b8;border-radius:1.8px"></div>
<svg class="a" style="left:0;top:0" width="800" height="598" viewBox="0 0 800 598"><path d="M345.4,494.8 l2,2 l3.6,-4" fill="none" stroke="#fff" stroke-width="1" stroke-linecap="round" stroke-linejoin="round"/></svg>
<span class="t" style="left:355.20px;top:473.35px;font-size:10.1px;color:#1a1a1a;transform:scaleX(0.8614);">Сжать этот диск для экономии места</span>
<span class="t" style="left:355.40px;top:490.55px;font-size:10.1px;color:#1a1a1a;transform:scaleX(0.8486);">Разрешить индексировать содержимое файлов на этом</span>
<span class="t" style="left:355.20px;top:501.55px;font-size:10.1px;color:#1a1a1a;transform:scaleX(0.8508);">диске в дополнение к свойствам файла</span>
<div class="a" style="left:425.0px;top:534.4px;width:56.6px;height:15.4px;background:#fdfdfd;border-radius:2.6px;box-shadow:inset 0 0 0 1px #0a67c0"></div>
<div class="a" style="left:488.4px;top:534.4px;width:55.8px;height:15.4px;background:#fdfdfd;border-radius:2.6px;box-shadow:inset 0 0 0 0.7px #d0d0d0"></div>
<div class="a" style="left:551.4px;top:534.4px;width:55.4px;height:15.4px;background:#f6f6f6;border-radius:2.6px;box-shadow:inset 0 0 0 0.7px #e2e2e2"></div>
<span class="t" style="left:446.40px;top:538.55px;font-size:10.1px;color:#1a1a1a;transform:scaleX(0.8497);">OK</span>
<span class="t" style="left:500.60px;top:538.55px;font-size:10.1px;color:#1a1a1a;transform:scaleX(0.8449);">Отмена</span>
<span class="t" style="left:557.40px;top:538.55px;font-size:10.1px;color:#a0a0a0;transform:scaleX(0.8321);">Применить</span>
<div class="a" style="left:0;top:565.6px;width:800px;height:33px;background:#1e1e1e"></div>
<div class="a" style="left:78px;top:565.6px;width:37.4px;height:33px;background:#272727"></div><div class="a" style="left:78px;top:565.6px;width:34.4px;height:33px;background:#2f2f2f"></div>
<div class="a" style="left:78px;top:595.4px;width:37.4px;height:1.7px;background:#60b2ec"></div>
<div class="a" style="left:795px;top:565.6px;width:1px;height:33px;background:#4a4a4a"></div>
<svg class="a" style="left:0;top:0" width="800" height="598" viewBox="0 0 800 598"><defs><linearGradient id="wl" x1="0" y1="0" x2="1" y2="1"><stop offset="0" stop-color="#6ad6fb"/><stop offset="1" stop-color="#1a9bea"/></linearGradient>
<linearGradient id="fe1" x1="0" y1="0" x2="0" y2="1"><stop offset="0" stop-color="#fcd757"/><stop offset="1" stop-color="#f2b420"/></linearGradient>
<linearGradient id="fe2" x1="0" y1="0" x2="0" y2="1"><stop offset="0" stop-color="#3aa0f0"/><stop offset="1" stop-color="#126dc4"/></linearGradient></defs>
<g fill="url(#wl)"><rect x="10" y="573" width="8.5" height="8.5" rx=".6"/><rect x="19.5" y="573" width="8.5" height="8.5" rx=".6"/><rect x="10" y="582.5" width="8.5" height="8.5" rx=".6"/><rect x="19.5" y="582.5" width="8.5" height="8.5" rx=".6"/></g>
<circle cx="55.4" cy="580.4" r="5.9" fill="#474747" stroke="#e4e4e4" stroke-width="1.9"/>
<path d="M59.8,584.8 l5.2,5.4" stroke="#e4e4e4" stroke-width="2.3" stroke-linecap="round"/>
<!-- explorer -->
<path d="M87.2,574.6 Q87.2,573.2 88.6,573.2 H93.6 L95.6,575.4 H104.8 Q106.2,575.4 106.2,576.8 V580 H87.2Z" fill="#e8a91c"/>
<path d="M87.2,577.4 H106.2 V588.8 Q106.2,590.2 104.8,590.2 H88.6 Q87.2,590.2 87.2,588.8Z" fill="url(#fe1)"/>
<path d="M91,590.2 V586.4 Q91,584.8 92.6,584.8 H100.8 Q102.4,584.8 102.4,586.4 V590.2Z" fill="url(#fe2)"/>
<rect x="93.4" y="587.4" width="6.6" height="1.2" rx=".6" fill="#0d4f98"/>
<!-- tray -->
<path d="M627.3,583.8 l4.4,-4.6 l4.4,4.6" fill="none" stroke="#f0f0f0" stroke-width="1.15" stroke-linecap="round" stroke-linejoin="round"/>
<g fill="none" stroke="#f0f0f0" stroke-width=".95"><circle cx="650.1" cy="581.6" r="5.7"/><ellipse cx="650.1" cy="581.6" rx="2.5" ry="5.7"/><path d="M644.4,581.6 h11.4 M645.3,578.7 h9.6 M645.3,584.5 h9.6"/></g>
<circle cx="654.2" cy="585.3" r="3" fill="#1e1e1e"/><circle cx="654.2" cy="585.3" r="2.1" fill="none" stroke="#f0f0f0" stroke-width=".9"/><path d="M652.8,583.9 l2.8,2.8" stroke="#f0f0f0" stroke-width=".9"/>
<g transform="translate(669,581.7) scale(.84) translate(-669.4,-581.8)" fill="none" stroke="#f0f0f0" stroke-width="1.15" stroke-linecap="round" stroke-linejoin="round"><path d="M662.6,579.6 h2.4 l3.2,-2.8 v10 l-3.2,-2.8 h-2.4Z"/><path d="M670.4,579.4 q1.6,2.4 0,4.8 M672.6,577.6 q2.8,4.2 0,8.4 M674.8,576 q3.8,5.8 0,11.6"/></g>
<!-- notification -->
<path d="M767.6,575.4 H780 V585.2 H773.6 L771,588 V585.2 H767.6Z" fill="#f4f4f4"/>
<path d="M769.8,578 h8 M769.8,580.2 h8 M769.8,582.4 h5" stroke="#1e1e1e" stroke-width=".9"/>
<circle cx="778.4" cy="586" r="3" fill="#1e1e1e"/><circle cx="778.4" cy="586" r="2.2" fill="none" stroke="#f0f0f0" stroke-width=".9"/><path d="M776.9,584.5 l3,3" stroke="#f0f0f0" stroke-width=".9"/>
</svg>
<span class="t" style="left:684.00px;top:576.50px;font-size:10.2px;color:#f4f4f4;transform:scaleX(0.8233);">РУС</span>
<span class="t" style="left:716.40px;top:571.10px;font-size:10px;color:#f4f4f4;transform:scaleX(0.8475);">15:53:48</span>
<span class="t" style="left:711.40px;top:584.50px;font-size:10px;color:#f4f4f4;transform:scaleX(0.8350);">08.01.2026</span>
</body></html>
